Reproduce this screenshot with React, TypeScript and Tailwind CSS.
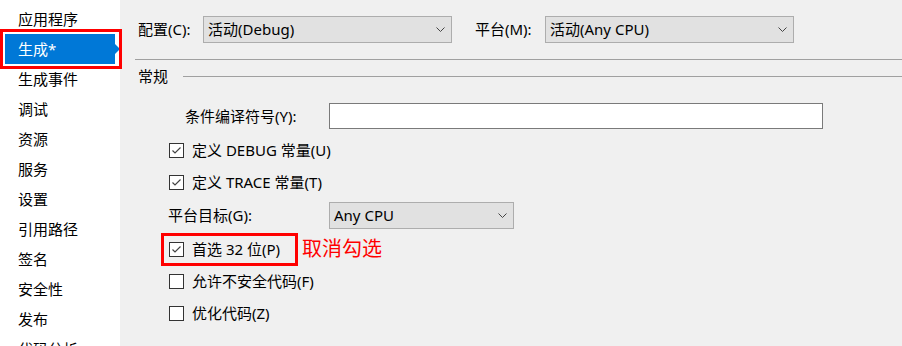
import React from "react";

const FONT = { fontFamily: '"Noto Sans", "Noto Sans CJK SC", sans-serif' };

function Chevron() {
  return (
    <svg width="9" height="6" viewBox="0 0 9 6" className="shrink-0">
      <polyline points="0.5,0.5 4.5,4.5 8.5,0.5" fill="none" stroke="#444" strokeWidth="1" />
    </svg>
  );
}

function Select({ text, w }: { text: string; w: string }) {
  return (
    <div className={`${w} flex h-[27px] shrink-0 items-center justify-between border border-[#adadad] bg-[#e1e1e1] pl-[4px] pr-[6px]`}>
      <span className="text-[15px] leading-none text-black">{text}</span>
      <Chevron />
    </div>
  );
}

function Check({ checked, label }: { checked: boolean; label: string }) {
  return (
    <div className="flex h-[20px] items-center">
      <div className="flex h-[15px] w-[15px] shrink-0 items-center justify-center border border-[#333] bg-white">
        {checked && (
          <svg width="13" height="13" viewBox="0 0 13 13">
            <polyline points="2.5,6.5 5,9 10.5,3.5" fill="none" stroke="#444" strokeWidth="1.2" />
          </svg>
        )}
      </div>
      <span className="ml-[8px] text-[15px] leading-none text-black">{label}</span>
    </div>
  );
}

const items = ["应用程序", "生成*", "生成事件", "调试", "资源", "服务", "设置", "引用路径", "签名", "安全性", "发布", "代码分析"];

export default function App() {
  return (
    <div className="relative flex h-[346px] w-[902px] overflow-hidden bg-[#f0f0f0]" style={FONT}>
      <div className="w-[120px] shrink-0 bg-white pt-[4px]">
        {items.map((it, i) =>
          i === 1 ? (
            <div key={it} className="relative ml-[5px] flex h-[30px] w-[110px] items-center bg-[#0078d7] pl-[13px] text-[15px] text-white">
              {it}
              <div className="absolute right-[-5px] top-1/2 h-0 w-0 -translate-y-1/2 border-y-[5px] border-l-[5px] border-y-transparent border-l-[#0078d7]" />
            </div>
          ) : (
            <div key={it} className="flex h-[30px] items-center pl-[18px] text-[15px] text-black">
              {it}
            </div>
          )
        )}
      </div>

      <div className="flex min-w-0 flex-1 flex-col">
        <div className="mt-[16px] flex h-[27px] items-center pl-[18px]">
          <span className="w-[65px] shrink-0 text-[15px] text-black">配置(C):</span>
          <Select text="活动(Debug)" w="w-[249px]" />
          <span className="ml-[23px] w-[70px] shrink-0 text-[15px] text-black">平台(M):</span>
          <Select text="活动(Any CPU)" w="w-[249px]" />
        </div>

        <div className="ml-[15px] mt-[16px] h-px bg-[#a0a0a0]" />

        <div className="mt-[6px] flex h-[20px] items-center pl-[18px]">
          <span className="text-[15px] text-black">常规</span>
          <div className="ml-[15px] h-px flex-1 bg-[#a0a0a0]" />
        </div>

        <div className="mt-[17px] flex h-[26px] items-center pl-[65px]">
          <span className="w-[144px] shrink-0 text-[15px] text-black">条件编译符号(Y):</span>
          <div className="h-[26px] w-[494px] border border-[#7a7a7a] bg-white" />
        </div>

        <div className="ml-[49px] mt-[11px]">
          <Check checked label="定义 DEBUG 常量(U)" />
        </div>
        <div className="ml-[49px] mt-[12px]">
          <Check checked label="定义 TRACE 常量(T)" />
        </div>

        <div className="ml-[48px] mt-[10px] flex h-[27px] items-center">
          <span className="w-[161px] shrink-0 text-[15px] text-black">平台目标(G):</span>
          <div className="flex h-[27px] w-[185px] shrink-0 items-center justify-between border border-[#adadad] bg-[#e1e1e1] pl-[4px] pr-[6px]">
            <span className="text-[15px] leading-none text-black">Any CPU</span>
            <Chevron />
          </div>
        </div>

        <div className="ml-[49px] mt-[10px] flex items-center">
          <Check checked label="首选 32 位(P)" />
          <span className="ml-[22px] text-[20px] leading-none text-[#ff0000]">取消勾选</span>
        </div>
        <div className="ml-[49px] mt-[12px]">
          <Check checked={false} label="允许不安全代码(F)" />
        </div>
        <div className="ml-[49px] mt-[12px]">
          <Check checked={false} label="优化代码(Z)" />
        </div>
      </div>

      <div className="pointer-events-none absolute left-[0px] top-[29px] h-[40px] w-[122px] border-[3px] border-[#ff0000]" />
      <div className="pointer-events-none absolute left-[161px] top-[233px] h-[33px] w-[137px] border-[3px] border-[#ff0000]" />
    </div>
  );
}
